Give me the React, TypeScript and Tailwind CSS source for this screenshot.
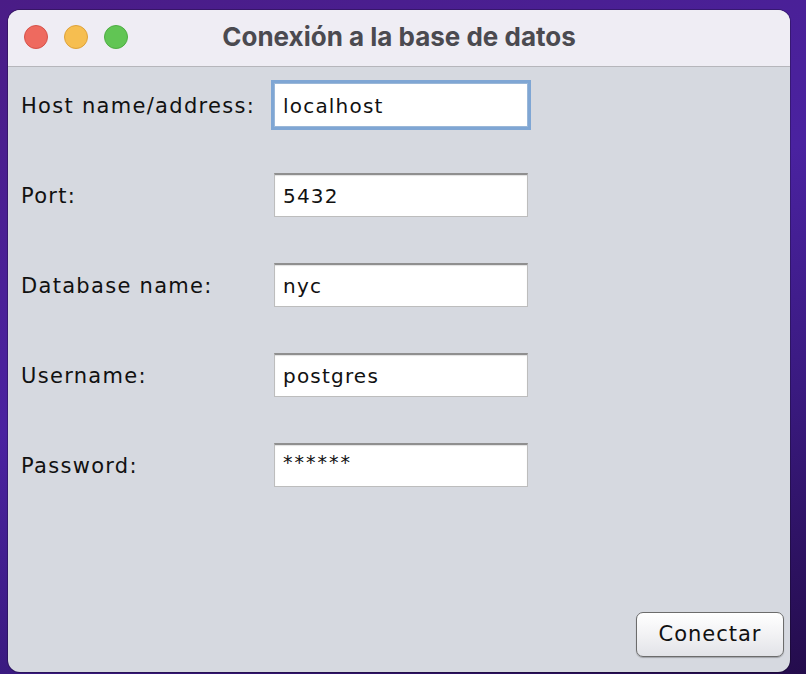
import React from 'react'

const FIELDS = [
  { label: 'Host name/address:', value: 'localhost', focused: true },
  { label: 'Port:', value: '5432' },
  { label: 'Database name:', value: 'nyc' },
  { label: 'Username:', value: 'postgres' },
  { label: 'Password:', value: '******', secret: true },
]

export default function App() {
  return (
    <div className="w-[806px] h-[674px] overflow-hidden bg-[linear-gradient(160deg,#4a1c86_0%,#4a22a0_45%,#3a1a80_70%,#240c4c_100%)] pt-[10px] pl-[8px] pr-[16px] pb-[2px]">
      <div className="h-full rounded-[12px] overflow-hidden flex flex-col bg-[#d6d9e0] shadow-[0_0_0_1px_rgba(0,0,0,0.25)]">
        {/* title bar */}
        <div className="h-[57px] shrink-0 bg-[#efedf4] border-b border-[#b6b6bb] flex items-center relative">
          <div className="absolute left-[16px] top-[15px] flex gap-[16px]">
            <span className="w-[24px] h-[24px] rounded-full bg-[#ee6a5f] border border-[#d6524a]" />
            <span className="w-[24px] h-[24px] rounded-full bg-[#f6be50] border border-[#dea23a]" />
            <span className="w-[24px] h-[24px] rounded-full bg-[#61c554] border border-[#4ead43]" />
          </div>
          <div className="flex-1 text-center text-[26px] leading-none -mt-[2px] font-bold text-[#4b4a50] font-['Inter',sans-serif]">
            Conexión a la base de datos
          </div>
        </div>

        {/* form body */}
        <div className="flex-1 flex flex-col pl-[13px] pr-[6px] pt-[16px] pb-[15px] font-['DejaVu_Sans',sans-serif] text-[#111111]">
          <div className="flex flex-col gap-[46px]">
            {FIELDS.map(f => (
              <div key={f.label} className="flex items-center h-[44px]">
                <span className="w-[253px] shrink-0 mt-[3px] text-[21px] tracking-[1.3px]">{f.label}</span>
                <div
                  className={
                    f.focused
                      ? 'w-[254px] h-[44px] bg-white border border-[#9ab7d8] ring-[3px] ring-[#7fa6d4] flex items-center pl-[8px]'
                      : 'w-[254px] h-[44px] bg-white border border-[#bdbdbd] border-t-[#8f8f8f] border-t-2 shadow-[inset_0_1px_1px_rgba(0,0,0,0.12)] flex items-center pl-[8px]'
                  }
                >
                  {f.secret ? (
                    <span className="text-[19px] tracking-[2px] -mt-[7px]">{f.value}</span>
                  ) : (
                    <span className="text-[20px] tracking-[1.2px] mt-[1px]">{f.value}</span>
                  )}
                </div>
              </div>
            ))}
          </div>
          <div className="flex-1" />
          <div className="flex justify-end">
            <button className="w-[148px] h-[45px] rounded-[7px] border border-[#6c6c6c] bg-[linear-gradient(#ffffff,#f2f2f4_50%,#e2e3e8)] shadow-[0_1px_1px_rgba(0,0,0,0.25)] text-[21px] tracking-[1px] text-[#111111] font-['DejaVu_Sans',sans-serif]">
              Conectar
            </button>
          </div>
        </div>
      </div>
    </div>
  )
}
